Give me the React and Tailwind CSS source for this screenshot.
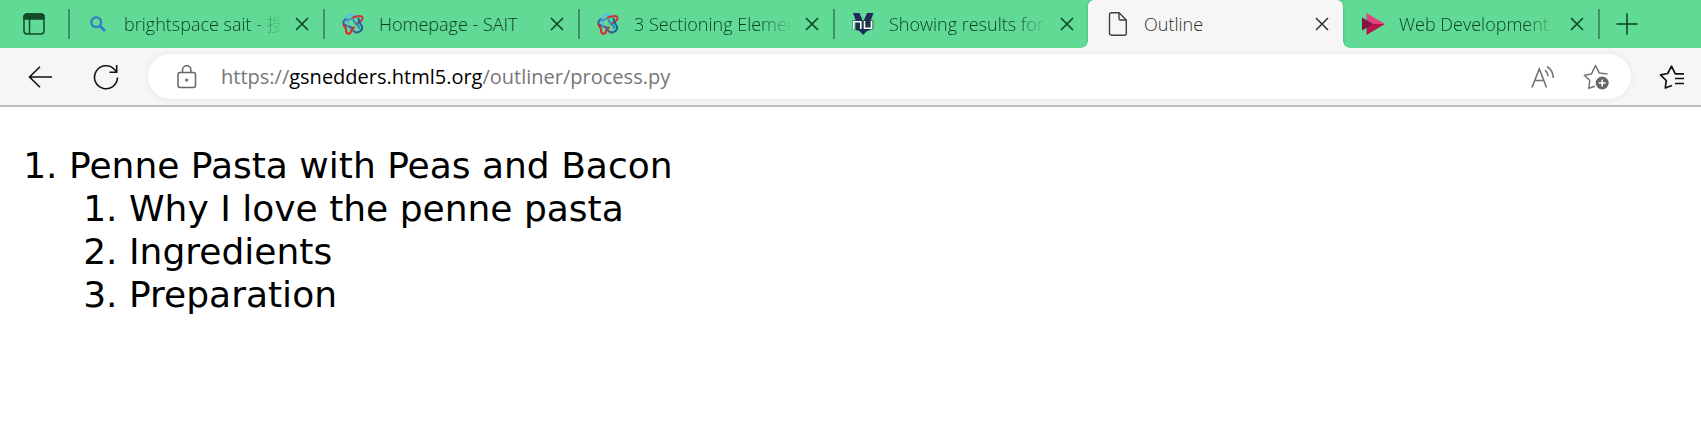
import React from "react";

function CloseIcon() {
  return (
    <svg width="14" height="14" viewBox="0 0 14 14" fill="none" stroke="currentColor" strokeWidth="1.5" aria-hidden="true">
      <path d="M1 1l12 12M13 1L1 13" />
    </svg>
  );
}

function SearchIcon() {
  return (
    <svg width="16" height="16" viewBox="0 0 16 16" fill="none" stroke="#2f7fc6" aria-hidden="true">
      <circle cx="6.2" cy="6.2" r="4.9" strokeWidth="2.3" />
      <path d="M9.8 9.8l5.2 5.2" strokeWidth="2.8" />
    </svg>
  );
}

function KnotIcon() {
  return (
    <svg width="22" height="22" viewBox="0 0 22 22" fill="none" strokeWidth="2" strokeLinecap="round" strokeLinejoin="round" aria-hidden="true">
      <path d="M5 5.500c-3 1-4.500 4-3 6 1.500 1.500 4 1.200 6.500 2.500" stroke="#3c63a8" />
      <path d="M13 3.500C11 .8 6.500 1 5.200 3.500 4.500 6 6.500 8 6 12" stroke="#56c0e4" />
      <path d="M4.500 7.500c3-.5 7-3.500 9.500-4" stroke="#4a8fca" />
      <path d="M1.500 11.500c.5 2.500 3.500 3.500 2.500 6.500" stroke="#d8272f" />
      <path d="M4 18c.5 3.500 4.500 3.500 5 .5.3-2 1-3.500 3-4" stroke="#e02830" />
      <path d="M11 4.500c3-.8 5.500-2 8-1.300 2.500 1 1.800 3.500-.5 5l-4.500 3" stroke="#cf3340" />
      <path d="M16.500 5.500c-.5 3.500 4 6.500 3.700 9.500-.5 3-3.700 5-6.700 4.200" stroke="#1f5f9f" />
      <path d="M11.500 7c.3 4 6 4 5.500 8" stroke="#2f86c4" />
      <path d="M13.500 19.200c-3-.7-3-3.500-5-5.200" stroke="#6b4f8c" />
    </svg>
  );
}

function ValidatorIcon() {
  return (
    <svg width="24" height="24" viewBox="0 0 24 24" fill="none" aria-hidden="true">
      <path d="M2 1h6.500l3.700 9L16 1h6.500l-3 8v9l-3.500 1-3.800 4L8.500 19l-3.500-1V9z" fill="#222a5c" />
      <path d="M1.500 8h21v9.500h-21z" fill="#173c3c" opacity=".6" />
      <path d="M2.800 17V9.800h7V17M13.500 9v7.200h7V9" stroke="#fff" strokeWidth="1.600" />
    </svg>
  );
}

function PageIcon() {
  return (
    <svg width="20" height="26" viewBox="0 0 20 26" fill="none" stroke="#3f3f3f" strokeWidth="1.4" strokeLinejoin="round" aria-hidden="true">
      <path d="M3.500 1.700H11L18.300 9v13.200a2 2 0 0 1-2 2H3.500a2 2 0 0 1-2-2V3.700a2 2 0 0 1 2-2z" />
      <path d="M11 1.700v5.800A1.500 1.500 0 0 0 12.500 9h5.800" />
    </svg>
  );
}

function ArrowLogo() {
  return (
    <svg width="24" height="24" viewBox="0 0 24 24" aria-hidden="true">
      <path d="M5.500 1L24 12H5.500z" fill="#e0457f" />
      <path d="M5.500 23L24 12H5.500z" fill="#b8154c" />
      <path d="M1 5.500L12 12 1 18.500z" fill="#7c1846" />
    </svg>
  );
}

function TabActionsIcon() {
  return (
    <svg width="22" height="22" viewBox="0 0 22 22" fill="none" stroke="#124a2a" strokeWidth="1.5" aria-hidden="true">
      <rect x="1" y="1" width="20" height="20" rx="3.200" />
      <path d="M1 6V4a3 3 0 0 1 3-3h14a3 3 0 0 1 3 3v2z" fill="#124a2a" />
      <path d="M6.500 6v15" />
    </svg>
  );
}

function BackIcon() {
  return (
    <svg width="24" height="22" viewBox="0 0 24 22" fill="none" stroke="#111" strokeWidth="1.600" aria-hidden="true">
      <path d="M24 11H1.500M12 .7L1.500 11 12 21.300" />
    </svg>
  );
}

function ReloadIcon() {
  return (
    <svg width="26" height="26" viewBox="0 0 26 26" fill="none" stroke="#111" strokeWidth="1.600" aria-hidden="true">
      <path d="M24.500 13.500A11.500 11.500 0 1 1 21.500 5.500l2 2.500" />
      <path d="M23.700 1v7.200h-7.200" />
    </svg>
  );
}

function LockIcon() {
  return (
    <svg width="20" height="24" viewBox="0 0 20 24" fill="none" stroke="#666" strokeWidth="1.500" aria-hidden="true">
      <rect x="1" y="7.500" width="17.500" height="15" rx="2.200" />
      <path d="M5.500 7.500V5a4.200 4.200 0 0 1 8.400 0v2.500" />
      <circle cx="9.700" cy="15" r="1.600" fill="#666" stroke="none" />
    </svg>
  );
}

function ReadAloudIcon() {
  return (
    <svg width="24" height="24" viewBox="0 0 24 24" fill="none" stroke="#737373" strokeWidth="1.600" aria-hidden="true">
      <path d="M1 22.500L8.300 4l7.200 18.500M3.500 15.500h9.600" />
      <path d="M14 5.200c1.800 1.500 3 3.500 3.200 6M16 1.500c3.500 2.200 6 6 6.300 11.500" />
    </svg>
  );
}

function AddFavoriteIcon() {
  return (
    <svg width="26" height="26" viewBox="0 0 26 26" fill="none" aria-hidden="true">
      <path d="M12 22.300l-6.200 1.900 1-7.700-5.500-5.300 7.200-1.300L12.500 1.500l3.800 7.600 8.200 1" stroke="#737373" strokeWidth="1.500" strokeLinejoin="round" />
      <circle cx="19.200" cy="19" r="6.500" fill="#666" />
      <path d="M19.200 15.500v7M15.700 19h7" stroke="#fff" strokeWidth="1.500" />
    </svg>
  );
}

function FavoritesIcon() {
  return (
    <svg width="26" height="24" viewBox="0 0 26 24" fill="none" stroke="#111" strokeWidth="1.700" strokeLinejoin="round" aria-hidden="true">
      <path d="M13 20.500L6.300 23l.9-7.500L1.500 9.800l7.200-1.300L12.500 1.200l3.800 7.600H25M16 13.500h9M16 18.500h9" />
    </svg>
  );
}

const tabs = [
  { title: "brightspace sait - 搜", icon: <SearchIcon />, fade: true },
  { title: "Homepage - SAIT", icon: <KnotIcon /> },
  { title: "3 Sectioning Elemen", icon: <KnotIcon />, fade: true },
  { title: "Showing results for", icon: <ValidatorIcon />, fade: true },
  { title: "Outline", icon: <PageIcon />, active: true },
  { title: "Web Development 1", icon: <ArrowLogo />, fade: true, plain: true },
];

const fadeMask = "[mask-image:linear-gradient(to_right,#000_calc(100%-32px),transparent)]";

function Divider() {
  return <span className="h-[30px] w-0.5 shrink-0 bg-[#3a9763]" />;
}

function Tab({ tab }) {
  const { title, icon, fade, active, plain } = tab;
  return (
    <div
      className={
        "relative flex h-full w-[255px] min-w-0 items-center " +
        (active
          ? "rounded-t-md bg-[#f6f6f6] text-[#2e2e2e] shadow-[0_0_3px_rgba(0,0,0,0.25)] before:absolute before:bottom-0 before:-left-1.5 before:size-1.5 before:bg-[radial-gradient(circle_at_0_0,transparent_5px,#f6f6f6_6px)] after:absolute after:-right-1.5 after:bottom-0 after:z-10 after:size-1.5 after:bg-[radial-gradient(circle_at_100%_0,transparent_5px,#f6f6f6_6px)]"
          : "text-[#0c3f22]")
      }
    >
      {active || plain ? <span className="w-0.5 shrink-0" /> : <Divider />}
      <button role="tab" aria-selected={!!active} className="ml-4 flex h-full min-w-0 flex-1 items-center gap-[14px] text-left">
        <span className="flex w-6 shrink-0 justify-center">{icon}</span>
        <span className={"block min-w-0 flex-1 overflow-hidden whitespace-nowrap " + (fade ? fadeMask : "")}>{title}</span>
      </button>
      <button aria-label={"Close " + title} className="mr-[9px] ml-2 flex h-6 w-6 shrink-0 items-center justify-center">
        <CloseIcon />
      </button>
    </div>
  );
}

export default function App() {
  return (
    <div className="bg-white">
      <header className="font-['Open_Sans','Noto_Sans_CJK_SC',sans-serif]">
        <div className="flex h-12 items-center overflow-hidden bg-[#60da94] text-[18px] font-light">
          <button aria-label="Tab actions" className="flex w-[68px] shrink-0 justify-center">
            <TabActionsIcon />
          </button>
          <div role="tablist" className="flex h-full min-w-0 items-center">
            {tabs.map((tab) => (
              <Tab key={tab.title} tab={tab} />
            ))}
          </div>
          <Divider />
          <button aria-label="New tab" className="ml-4 shrink-0 text-[#0c3f22]">
            <svg width="22" height="22" viewBox="0 0 22 22" stroke="currentColor" strokeWidth="1.500" aria-hidden="true">
              <path d="M11 .5v21M.5 11h21" />
            </svg>
          </button>
        </div>
        <div className="flex items-center border-b-2 border-[#bcbcbc] bg-[#f6f6f6] py-1.5 pr-4 pl-7">
          <button aria-label="Back" className="shrink-0">
            <BackIcon />
          </button>
          <button aria-label="Refresh" className="ml-[41px] shrink-0">
            <ReloadIcon />
          </button>
          <div className="ml-[29px] flex h-[45px] min-w-0 flex-1 items-center rounded-full bg-white pr-[22px] pl-[29px] shadow-[0_0_6px_rgba(0,0,0,0.08)]">
            <LockIcon />
            <a href="https://gsnedders.html5.org/outliner/process.py" className="ml-6 min-w-0 flex-1 truncate text-[20px] text-[#767676]">
              https://<span className="text-black">gsnedders.html5.org</span>/outliner/process.py
            </a>
            <button aria-label="Read aloud" className="shrink-0">
              <ReadAloudIcon />
            </button>
            <button aria-label="Add this page to favorites" className="ml-7 shrink-0">
              <AddFavoriteIcon />
            </button>
          </div>
          <button aria-label="Favorites" className="ml-7 shrink-0">
            <FavoritesIcon />
          </button>
        </div>
      </header>
      <main className="pt-[37px] font-[Verdana,'DejaVu_Sans',sans-serif] text-[36px] leading-[43px] text-black">
        <ol className="list-decimal pl-[69px]">
          <li>
            Penne Pasta with Peas and Bacon
            <ol className="list-decimal pl-[60px]">
              <li>Why I love the penne pasta</li>
              <li>Ingredients</li>
              <li>Preparation</li>
            </ol>
          </li>
        </ol>
      </main>
    </div>
  );
}
